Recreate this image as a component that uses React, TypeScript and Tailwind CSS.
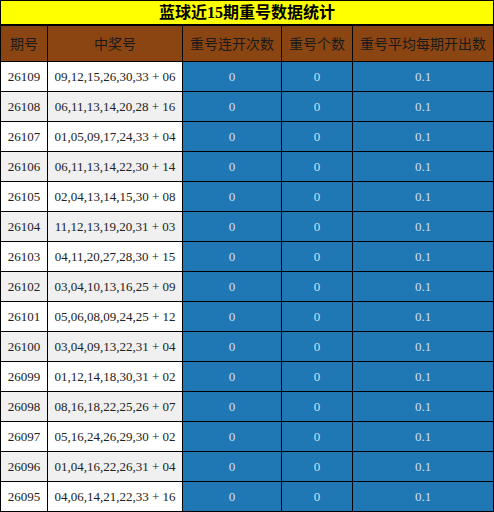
import React from "react";

const rows: [string, string][] = [
  ["26109", "09,12,15,26,30,33 + 06"],
  ["26108", "06,11,13,14,20,28 + 16"],
  ["26107", "01,05,09,17,24,33 + 04"],
  ["26106", "06,11,13,14,22,30 + 14"],
  ["26105", "02,04,13,14,15,30 + 08"],
  ["26104", "11,12,13,19,20,31 + 03"],
  ["26103", "04,11,20,27,28,30 + 15"],
  ["26102", "03,04,10,13,16,25 + 09"],
  ["26101", "05,06,08,09,24,25 + 12"],
  ["26100", "03,04,09,13,22,31 + 04"],
  ["26099", "01,12,14,18,30,31 + 02"],
  ["26098", "08,16,18,22,25,26 + 07"],
  ["26097", "05,16,24,26,29,30 + 02"],
  ["26096", "01,04,16,22,26,31 + 04"],
  ["26095", "04,06,14,21,22,33 + 16"],
];

const grid = "grid grid-cols-[47px_135px_99px_71px_141px]";
const cell = "box-border border-r border-b border-black flex items-center justify-center";

export default function App() {
  return (
    <div
      className="w-[494px] box-border border-l border-t border-black"
      style={{ fontFamily: '"Liberation Serif", "Noto Sans CJK SC", serif' }}
    >
      <div className="box-border h-[25px] bg-[#ffff00] border-r border-b-2 border-black flex items-center justify-center text-[16px] font-bold text-black leading-none">
        蓝球近15期重号数据统计
      </div>
      <div className={`${grid} h-[36px] bg-[#8b4513] text-[14px] text-[#1a1a1a]`} style={{ fontFamily: '"Noto Sans CJK SC", sans-serif' }}>
        <div className={cell}>期号</div>
        <div className={cell}>中奖号</div>
        <div className={cell}>重号连开次数</div>
        <div className={cell}>重号个数</div>
        <div className={cell}>重号平均每期开出数</div>
      </div>
      {rows.map(([p, n], i) => (
        <div key={p} className={`${grid} h-[30px] text-[13px]`}>
          <div className={`${cell} ${i % 2 === 1 ? "bg-[#f0f0f0]" : "bg-white"} text-[#222]`}>{p}</div>
          <div className={`${cell} ${i % 2 === 1 ? "bg-[#f0f0f0]" : "bg-white"} text-[#222]`}>{n}</div>
          <div className={`${cell} bg-[#1f77b4] text-[#cfe0f0]`}>0</div>
          <div className={`${cell} bg-[#1f77b4] text-[#cfe0f0]`}>0</div>
          <div className={`${cell} bg-[#1f77b4] text-[#cfe0f0]`}>0.1</div>
        </div>
      ))}
    </div>
  );
}
